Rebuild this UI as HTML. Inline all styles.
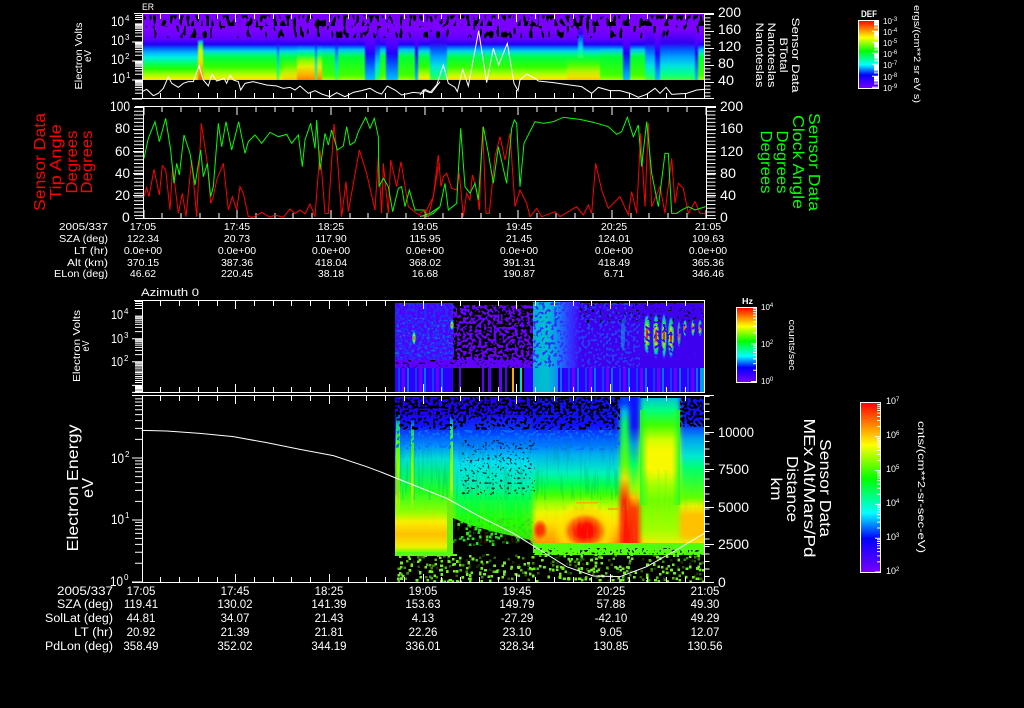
<!DOCTYPE html>
<html><head><meta charset="utf-8"><title>Sensor Data</title>
<style>
html,body{margin:0;padding:0;background:#000;width:1024px;height:708px;overflow:hidden}
svg{display:block}
text{font-family:"Liberation Sans",sans-serif;fill:#fff}
.a{shape-rendering:crispEdges}
</style></head><body>
<svg width="1024" height="708" viewBox="0 0 1024 708" xmlns="http://www.w3.org/2000/svg">
<defs>
<clipPath id="c1"><rect x="143" y="14" width="561" height="66"/></clipPath>
<clipPath id="c3"><rect x="395" y="302" width="309" height="90"/></clipPath>
<clipPath id="c4"><rect x="395" y="397" width="309" height="185"/></clipPath>
<clipPath id="c4b"><rect x="533" y="440" width="87" height="103"/></clipPath>
<filter id="b1" filterUnits="userSpaceOnUse" x="120" y="0" width="620" height="100" color-interpolation-filters="sRGB"><feGaussianBlur stdDeviation=".7 0"/></filter>
<filter id="b4" filterUnits="userSpaceOnUse" x="370" y="390" width="360" height="170" color-interpolation-filters="sRGB"><feGaussianBlur stdDeviation="2.5 0"/></filter>
<filter id="f50" x="0" y="0" width="100%" height="100%" color-interpolation-filters="sRGB"><feTurbulence type="fractalNoise" baseFrequency=".33" numOctaves="1" seed="4" result="t"/><feColorMatrix in="t" values="0 0 0 0 0 0 0 0 0 0 0 0 0 0 0 1 0 0 0 0" result="m"/><feComponentTransfer in="m" result="c"><feFuncA type="linear" slope="50" intercept="-25"/></feComponentTransfer><feComposite in="SourceGraphic" in2="c" operator="in"/></filter>
<filter id="f30" x="0" y="0" width="100%" height="100%" color-interpolation-filters="sRGB"><feTurbulence type="fractalNoise" baseFrequency=".33" numOctaves="1" seed="9" result="t"/><feColorMatrix in="t" values="0 0 0 0 0 0 0 0 0 0 0 0 0 0 0 1 0 0 0 0" result="m"/><feComponentTransfer in="m" result="c"><feFuncA type="linear" slope="50" intercept="-28"/></feComponentTransfer><feComposite in="SourceGraphic" in2="c" operator="in"/></filter>
<filter id="f15" x="0" y="0" width="100%" height="100%" color-interpolation-filters="sRGB"><feTurbulence type="fractalNoise" baseFrequency=".4" numOctaves="1" seed="15" result="t"/><feColorMatrix in="t" values="0 0 0 0 0 0 0 0 0 0 0 0 0 0 0 1 0 0 0 0" result="m"/><feComponentTransfer in="m" result="c"><feFuncA type="linear" slope="50" intercept="-31.5"/></feComponentTransfer><feComposite in="SourceGraphic" in2="c" operator="in"/></filter>
<filter id="fP1" x="0" y="0" width="100%" height="100%" color-interpolation-filters="sRGB"><feTurbulence type="fractalNoise" baseFrequency=".3 .1" numOctaves="1" seed="7" result="t"/><feColorMatrix in="t" values="0 0 0 0 0 0 0 0 0 0 0 0 0 0 0 1 0 0 0 0" result="m"/><feComponentTransfer in="m" result="c"><feFuncA type="linear" slope="50" intercept="-30"/></feComponentTransfer><feComposite in="SourceGraphic" in2="c" operator="in"/></filter>
<filter id="fP2" x="0" y="0" width="100%" height="100%" color-interpolation-filters="sRGB"><feTurbulence type="fractalNoise" baseFrequency=".3 .1" numOctaves="1" seed="12" result="t"/><feColorMatrix in="t" values="0 0 0 0 0 0 0 0 0 0 0 0 0 0 0 1 0 0 0 0" result="m"/><feComponentTransfer in="m" result="c"><feFuncA type="linear" slope="50" intercept="-27"/></feComponentTransfer><feComposite in="SourceGraphic" in2="c" operator="in"/></filter>
<filter id="fSp" x="0" y="0" width="100%" height="100%" color-interpolation-filters="sRGB"><feTurbulence type="fractalNoise" baseFrequency=".7" numOctaves="1" seed="21" result="t"/><feColorMatrix in="t" values="0 0 0 0 0 0 0 0 0 0 0 0 0 0 0 1 0 0 0 0" result="m"/><feComponentTransfer in="m" result="c"><feFuncA type="linear" slope="50" intercept="-35.5"/></feComponentTransfer><feMorphology in="c" operator="dilate" radius="1" result="d"/><feComposite in="SourceGraphic" in2="d" operator="in"/></filter>
<filter id="fSt" x="0" y="0" width="100%" height="100%" color-interpolation-filters="sRGB"><feTurbulence type="fractalNoise" baseFrequency=".45 .03" numOctaves="1" seed="5" result="t"/><feColorMatrix in="t" values="0 0 0 0 0 0 0 0 0 0 0 0 0 0 0 1 0 0 0 0" result="m"/><feComponentTransfer in="m" result="c"><feFuncA type="linear" slope="30" intercept="-16.5"/></feComponentTransfer><feComposite in="SourceGraphic" in2="c" operator="in"/></filter>

<linearGradient id="A" x1="0" y1="0" x2="0" y2="1"><stop offset=".24" stop-color="#7a00ff"/><stop offset=".38" stop-color="#6000ff"/><stop offset=".46" stop-color="#2000f0"/><stop offset=".52" stop-color="#0060ff"/><stop offset=".58" stop-color="#00b0ff"/><stop offset=".66" stop-color="#00f0e0"/><stop offset=".74" stop-color="#00ff70"/><stop offset=".83" stop-color="#20ff00"/><stop offset=".92" stop-color="#a0ff00"/><stop offset=".98" stop-color="#f0f000"/><stop offset="1" stop-color="#ffe000"/></linearGradient>
<linearGradient id="B" x1="0" y1="0" x2="0" y2="1"><stop offset=".24" stop-color="#7a00ff"/><stop offset=".38" stop-color="#6000ff"/><stop offset=".46" stop-color="#2000f0"/><stop offset=".50" stop-color="#0060ff"/><stop offset=".56" stop-color="#00d0f0"/><stop offset=".60" stop-color="#00f0a0"/><stop offset=".66" stop-color="#00ff40"/><stop offset=".80" stop-color="#30ff00"/><stop offset=".90" stop-color="#a0ff00"/><stop offset=".97" stop-color="#f0f000"/><stop offset="1" stop-color="#ffd000"/></linearGradient>
<linearGradient id="F" x1="0" y1="0" x2="0" y2="1"><stop offset=".24" stop-color="#7a00ff"/><stop offset=".38" stop-color="#6000ff"/><stop offset=".46" stop-color="#2000f0"/><stop offset=".50" stop-color="#0060ff"/><stop offset=".54" stop-color="#00c0ff"/><stop offset=".60" stop-color="#00f090"/><stop offset=".66" stop-color="#00ff30"/><stop offset=".92" stop-color="#40ff00"/><stop offset="1" stop-color="#a0ff00"/></linearGradient>
<linearGradient id="C" x1="0" y1="0" x2="0" y2="1"><stop offset=".24" stop-color="#7a00ff"/><stop offset=".46" stop-color="#5000ff"/><stop offset=".60" stop-color="#2000ff"/><stop offset=".72" stop-color="#0040ff"/><stop offset=".85" stop-color="#0080ff"/><stop offset="1" stop-color="#00c0ff"/></linearGradient>
<linearGradient id="M" x1="0" y1="0" x2="0" y2="1"><stop offset=".24" stop-color="#7a00ff"/><stop offset=".44" stop-color="#3000f0"/><stop offset=".55" stop-color="#0060ff"/><stop offset=".65" stop-color="#00a0ff"/><stop offset=".78" stop-color="#00e0e0"/><stop offset=".9" stop-color="#00ff90"/><stop offset="1" stop-color="#40ff40"/></linearGradient>
<linearGradient id="D" x1="0" y1="0" x2="0" y2="1"><stop offset=".24" stop-color="#7a00ff"/><stop offset=".38" stop-color="#6000ff"/><stop offset=".46" stop-color="#2000f0"/><stop offset=".50" stop-color="#0070ff"/><stop offset=".56" stop-color="#00e0e0"/><stop offset=".62" stop-color="#00ff60"/><stop offset=".70" stop-color="#80ff00"/><stop offset=".80" stop-color="#e0f000"/><stop offset=".92" stop-color="#ffb000"/><stop offset="1" stop-color="#ff8000"/></linearGradient>
<linearGradient id="E" x1="0" y1="0" x2="0" y2="1"><stop offset=".24" stop-color="#7a00ff"/><stop offset=".38" stop-color="#6000ff"/><stop offset=".42" stop-color="#00c0ff"/><stop offset=".47" stop-color="#30ff40"/><stop offset=".56" stop-color="#c0ff00"/><stop offset=".72" stop-color="#f0e000"/><stop offset=".88" stop-color="#ffa000"/><stop offset="1" stop-color="#ff5000"/></linearGradient>
<linearGradient id="G" x1="0" y1="0" x2="0" y2="1"><stop offset=".24" stop-color="#7a00ff"/><stop offset=".38" stop-color="#6000ff"/><stop offset=".46" stop-color="#2000f0"/><stop offset=".50" stop-color="#0060ff"/><stop offset=".56" stop-color="#00d0f0"/><stop offset=".60" stop-color="#00f0a0"/><stop offset=".66" stop-color="#00ff40"/><stop offset=".78" stop-color="#50ff00"/><stop offset=".88" stop-color="#c0f000"/><stop offset=".96" stop-color="#f0e000"/><stop offset="1" stop-color="#ffc000"/></linearGradient>

<linearGradient id="bar" x1="0" y1="0" x2="0" y2="1"><stop offset="0" stop-color="#f00"/><stop offset=".25" stop-color="#ff0"/><stop offset=".45" stop-color="#0f0"/><stop offset=".65" stop-color="#0ff"/><stop offset=".8" stop-color="#00f"/><stop offset="1" stop-color="#7800ff"/></linearGradient>

<linearGradient id="L1" x1="0" y1="0" x2="0" y2="1"><stop offset=".1" stop-color="#2000ff"/><stop offset=".18" stop-color="#1010ff"/><stop offset=".31" stop-color="#0090ff"/><stop offset=".40" stop-color="#00e0d0"/><stop offset=".48" stop-color="#00f080"/><stop offset=".6" stop-color="#20ff20"/><stop offset=".74" stop-color="#90ff00"/><stop offset=".80" stop-color="#f8f000"/><stop offset=".88" stop-color="#ffc000"/><stop offset=".96" stop-color="#f0f000"/><stop offset="1" stop-color="#60ff00"/></linearGradient>
<linearGradient id="T" x1="0" y1="0" x2="0" y2="1"><stop offset=".02" stop-color="#0050ff"/><stop offset=".1" stop-color="#00d0a0"/><stop offset=".25" stop-color="#40ff20"/><stop offset=".55" stop-color="#90ff00"/><stop offset=".8" stop-color="#e0f000" stop-opacity=".8"/><stop offset="1" stop-color="#e0f000" stop-opacity="0"/></linearGradient>
<linearGradient id="L2" x1="0" y1="0" x2="0" y2="1"><stop offset=".1" stop-color="#2000ff"/><stop offset=".24" stop-color="#0040ff"/><stop offset=".36" stop-color="#00a0ff"/><stop offset=".44" stop-color="#00e0f0"/><stop offset=".6" stop-color="#00f0b0"/><stop offset=".68" stop-color="#00ff50"/><stop offset=".85" stop-color="#20ff00"/><stop offset="1" stop-color="#40e000"/></linearGradient>
<linearGradient id="L3" x1="0" y1="0" x2="0" y2="1"><stop offset=".19" stop-color="#1010ff"/><stop offset=".29" stop-color="#0060ff"/><stop offset=".39" stop-color="#00b0f0"/><stop offset=".51" stop-color="#00f0c0"/><stop offset=".59" stop-color="#00ff50"/><stop offset=".66" stop-color="#40ff00"/><stop offset=".72" stop-color="#a0ff00"/><stop offset=".78" stop-color="#e8f800"/><stop offset=".85" stop-color="#ffe000"/><stop offset=".93" stop-color="#ffb000"/><stop offset="1" stop-color="#ff9000"/></linearGradient>
<linearGradient id="R1" x1="0" y1="0" x2="0" y2="1"><stop offset=".04" stop-color="#0040ff"/><stop offset=".1" stop-color="#00c0e0"/><stop offset=".18" stop-color="#00ff60"/><stop offset=".45" stop-color="#60ff00"/><stop offset=".55" stop-color="#f0e000"/><stop offset=".62" stop-color="#ff8000"/><stop offset=".70" stop-color="#ff2000"/><stop offset="1" stop-color="#ff1000"/></linearGradient>
<linearGradient id="R2" x1="0" y1="0" x2="0" y2="1"><stop offset=".2" stop-color="#1010ff"/><stop offset=".32" stop-color="#00a0e0"/><stop offset=".46" stop-color="#00ff60"/><stop offset=".62" stop-color="#a0ff00"/><stop offset=".68" stop-color="#ffc000"/><stop offset=".75" stop-color="#ff4000"/><stop offset="1" stop-color="#ff2000"/></linearGradient>
<linearGradient id="L5" x1="0" y1="0" x2="0" y2="1"><stop offset="0" stop-color="#00c0e0"/><stop offset=".09" stop-color="#00ff80"/><stop offset=".19" stop-color="#40ff00"/><stop offset=".29" stop-color="#d0ff00"/><stop offset=".36" stop-color="#f8f800"/><stop offset=".5" stop-color="#f8f800"/><stop offset=".6" stop-color="#a0ff00"/><stop offset=".7" stop-color="#70ff00"/><stop offset=".9" stop-color="#a0ff00"/><stop offset="1" stop-color="#f0f000"/></linearGradient>
<linearGradient id="L6" x1="0" y1="0" x2="0" y2="1"><stop offset=".16" stop-color="#1010ff"/><stop offset=".28" stop-color="#00a0f0"/><stop offset=".4" stop-color="#00e8d0"/><stop offset=".48" stop-color="#00ff70"/><stop offset=".68" stop-color="#60ff00"/><stop offset=".74" stop-color="#f0f000"/><stop offset=".8" stop-color="#ffc000"/><stop offset=".93" stop-color="#ffc000"/><stop offset="1" stop-color="#f0f000"/></linearGradient>
<linearGradient id="sideL" x1="0" y1="0" x2="1" y2="0"><stop offset="0" stop-color="#20ff20" stop-opacity=".9"/><stop offset="1" stop-color="#20ff20" stop-opacity="0"/></linearGradient>
<linearGradient id="sideR" x1="0" y1="0" x2="1" y2="0"><stop offset="0" stop-color="#20ff20" stop-opacity="0"/><stop offset="1" stop-color="#20ff20" stop-opacity=".9"/></linearGradient>
<radialGradient id="hot"><stop offset="0" stop-color="#ff0000"/><stop offset=".4" stop-color="#ff1000"/><stop offset=".75" stop-color="#ff6000" stop-opacity=".8"/><stop offset="1" stop-color="#ffa000" stop-opacity="0"/></radialGradient>
<radialGradient id="dome"><stop offset="0" stop-color="#ffc000"/><stop offset=".7" stop-color="#ffe000"/><stop offset="1" stop-color="#ffff00" stop-opacity="0"/></radialGradient>
<radialGradient id="pk"><stop offset="0" stop-color="#ff0000"/><stop offset=".22" stop-color="#ff2000"/><stop offset=".36" stop-color="#f0f000"/><stop offset=".56" stop-color="#20ff20"/><stop offset=".8" stop-color="#00c0e0"/><stop offset="1" stop-color="#0060ff" stop-opacity="0"/></radialGradient>
<linearGradient id="cy" x1="0" y1="0" x2="1" y2="0"><stop offset="0" stop-color="#00b0d8"/><stop offset=".3" stop-color="#00c0d0"/><stop offset=".5" stop-color="#1090f0"/><stop offset=".75" stop-color="#3040ff"/><stop offset="1" stop-color="#4000f0"/></linearGradient>
<pattern id="stL" width="17" height="24" patternUnits="userSpaceOnUse" x="395" y="368"><rect width="17" height="24" fill="#3000ff"/><rect x="3" width="2" height="24" fill="#1040ff"/><rect x="7" width="3" height="24" fill="#6a00ff"/><rect x="12" width="2" height="24" fill="#0070ff"/></pattern>
<g id="xt"><path fill="none" stroke="#fff" d="M142.5 0v8M160.5 0v5M179.5 0v5M198.5 0v5M217.5 0v5M235.5 0v8M254.5 0v5M273.5 0v5M291.5 0v5M310.5 0v5M329.5 0v8M348.5 0v5M366.5 0v5M385.5 0v5M404.5 0v5M423.5 0v8M441.5 0v5M460.5 0v5M479.5 0v5M498.5 0v5M516.5 0v8M535.5 0v5M554.5 0v5M573.5 0v5M591.5 0v5M610.5 0v8M629.5 0v5M647.5 0v5M666.5 0v5M685.5 0v5M704.5 0v8"/></g>
<g id="dec"><path fill="none" stroke="#fff" vector-effect="non-scaling-stroke" d="M3 69.9H10M3 52.3H10M3 39.8H10M3 30.1H10M3 22.2H10M3 15.5H10M3 9.7H10M3 4.6H10M0 100H10" /></g>
<g id="bt"><path fill="none" stroke="#fff" vector-effect="non-scaling-stroke" d="M2 69.9H6M2 52.3H6M2 39.8H6M2 30.1H6M2 22.2H6M2 15.5H6M2 9.7H6M2 4.6H6M0 100H6"/></g>
</defs>
<rect width="1024" height="708" fill="#000"/>

<!-- Panel 1 spectrogram -->
<g clip-path="url(#c1)">
<g filter="url(#b1)">
<rect x="130" y="14" width="68" height="66" fill="url(#A)"/>
<rect x="198" y="14" width="5" height="66" fill="url(#E)"/>
<rect x="203" y="14" width="80" height="66" fill="url(#B)"/>
<rect x="277" y="14" width="2" height="66" fill="url(#M)"/>
<rect x="283" y="14" width="14" height="66" fill="url(#G)"/>
<rect x="297" y="14" width="25" height="66" fill="url(#D)"/>
<rect x="315" y="14" width="2" height="66" fill="url(#M)"/>
<rect x="322" y="14" width="43" height="66" fill="url(#F)"/>
<rect x="335" y="14" width="3" height="66" fill="url(#M)"/>
<rect x="365" y="14" width="10" height="66" fill="url(#C)"/>
<rect x="375" y="14" width="5" height="66" fill="url(#M)"/>
<rect x="380" y="14" width="6" height="66" fill="url(#F)"/>
<rect x="386" y="14" width="12" height="66" fill="url(#C)"/>
<rect x="398" y="14" width="17" height="66" fill="url(#F)"/>
<rect x="415" y="14" width="3" height="66" fill="url(#C)"/>
<rect x="418" y="14" width="12" height="66" fill="url(#B)"/>
<rect x="430" y="14" width="17" height="66" fill="url(#M)"/>
<rect x="447" y="14" width="120" height="66" fill="url(#B)"/>
<rect x="567" y="14" width="33" height="66" fill="url(#G)"/>
<rect x="578" y="14" width="5" height="44" fill="url(#M)"/>
<rect x="600" y="14" width="23" height="66" fill="url(#F)"/>
<rect x="623" y="14" width="7" height="66" fill="url(#C)"/>
<rect x="630" y="14" width="15" height="66" fill="url(#F)"/>
<rect x="645" y="14" width="10" height="66" fill="url(#M)"/>
<rect x="655" y="14" width="5" height="66" fill="url(#C)"/>
<rect x="660" y="14" width="35" height="66" fill="url(#M)"/>
<rect x="695" y="14" width="3" height="66" fill="url(#C)"/>
<rect x="698" y="14" width="20" height="66" fill="url(#F)"/>
</g>
<rect x="142" y="15" width="562" height="11" fill="#000" filter="url(#fP2)"/>
<rect x="142" y="26" width="562" height="12" fill="#000" filter="url(#fP1)"/>
</g>

<!-- Panel 3 spectrogram -->
<g clip-path="url(#c3)">
<rect x="395" y="303" width="58" height="65" fill="#5000ff"/>
<rect x="395" y="303" width="58" height="65" fill="#2030f0" filter="url(#f50)"/>
<rect x="395" y="318" width="58" height="40" fill="#00a0e0" filter="url(#f15)" opacity=".5"/>
<rect x="453" y="305" width="80" height="63" fill="#6a00ff" filter="url(#f50)"/>
<rect x="533" y="302" width="47" height="90" fill="url(#cy)"/>
<rect x="533" y="302" width="47" height="66" fill="#3030ff" filter="url(#f30)"/>
<rect x="580" y="303" width="124" height="65" fill="#4000f0"/>
<rect x="580" y="303" width="124" height="65" fill="#2040f0" filter="url(#f30)"/>
<rect x="580" y="303" width="124" height="20" fill="#000" filter="url(#f15)"/>
<rect x="395" y="360" width="138" height="8" fill="#6000ff"/>
<rect x="395" y="360" width="138" height="8" fill="#000" filter="url(#f15)"/>
<rect x="395" y="368" width="52" height="24" fill="url(#stL)"/>
<rect x="447" y="368" width="6" height="24" fill="#3000ff"/>
<rect x="459" y="368" width="2" height="24" fill="#6000ff"/>
<rect x="482" y="368" width="2" height="24" fill="#6000ff"/>
<rect x="488" y="368" width="3" height="24" fill="#5000ff"/>
<rect x="499" y="368" width="3" height="24" fill="#6000ff"/>
<rect x="505" y="368" width="2" height="24" fill="#5000ff"/>
<rect x="512" y="368" width="2" height="24" fill="#ffa800"/>
<rect x="520" y="368" width="2" height="24" fill="#00e0d0"/>
<rect x="524" y="368" width="9" height="24" fill="#3000ff"/>
<rect x="558" y="368" width="146" height="24" fill="url(#stL)"/>
<rect x="700" y="368" width="4" height="24" fill="#00a0e0"/>
<g opacity=".9">
<ellipse cx="647" cy="334" rx="3.5" ry="22" fill="url(#pk)"/>
<ellipse cx="656" cy="336" rx="3.5" ry="24" fill="url(#pk)"/>
<ellipse cx="664" cy="336" rx="3" ry="24" fill="url(#pk)"/>
<ellipse cx="671" cy="337" rx="3.5" ry="22" fill="url(#pk)"/>
<ellipse cx="679" cy="334" rx="2" ry="14" fill="url(#pk)" opacity=".7"/>
<ellipse cx="685" cy="328" rx="2" ry="9" fill="url(#pk)"/>
<ellipse cx="693" cy="328" rx="2" ry="9" fill="url(#pk)"/>
<ellipse cx="700" cy="328" rx="2" ry="9" fill="url(#pk)"/>
</g>
<ellipse cx="452" cy="325" rx="2" ry="5" fill="url(#pk)"/>
<ellipse cx="414" cy="338" rx="2" ry="7" fill="url(#pk)"/>
<ellipse cx="623" cy="335" rx="2" ry="16" fill="#00c0d0" opacity=".5"/>
<rect x="640" y="303" width="64" height="65" fill="#4000f0" filter="url(#f30)"/>
</g>

<!-- Panel 4 spectrogram -->
<g clip-path="url(#c4)">
<g filter="url(#b4)">
<rect x="380" y="397" width="73" height="156" fill="url(#L1)"/>
<rect x="453" y="397" width="80" height="148" fill="url(#L2)"/>
<rect x="533" y="397" width="87" height="148" fill="url(#L3)"/>
<rect x="620" y="397" width="9" height="148" fill="url(#R1)"/>
<rect x="629" y="397" width="11" height="148" fill="url(#R2)"/>
<rect x="640" y="397" width="40" height="148" fill="url(#L5)"/>
<rect x="680" y="397" width="40" height="148" fill="url(#L6)"/>
</g>
<rect x="447" y="500" width="6" height="53" fill="#60f010"/>
<rect x="396" y="415" width="4" height="100" fill="url(#T)"/>
<rect x="411" y="420" width="3" height="90" fill="url(#T)"/>
<rect x="450" y="415" width="3" height="90" fill="url(#T)"/>
<rect x="640" y="410" width="8" height="95" fill="url(#sideL)"/>
<rect x="672" y="410" width="8" height="95" fill="url(#sideR)"/>
<g clip-path="url(#c4b)">
<ellipse cx="585" cy="532" rx="32" ry="34" fill="url(#dome)" opacity=".8"/>
<ellipse cx="585" cy="531" rx="22" ry="18" fill="url(#hot)"/>
<ellipse cx="540" cy="530" rx="8" ry="11" fill="url(#hot)" opacity=".8"/>
</g>
<rect x="576" y="502" width="22" height="1.5" fill="#ffa000" opacity=".8"/>
<rect x="608" y="508" width="12" height="2" fill="#ffa000" opacity=".8"/>
<path d="M453 518L470 525L495 532L530 540L533 545V556H453Z" fill="#000"/>
<rect x="453" y="518" width="80" height="28" fill="#20e020" filter="url(#fSp)"/>
<rect x="395" y="430" width="225" height="70" fill="#008090" opacity=".18" filter="url(#fSt)"/>
<rect x="395" y="470" width="309" height="40" fill="#00ff40" opacity=".12" filter="url(#fSt)"/>
<rect x="395" y="500" width="309" height="43" fill="#ffd000" opacity=".12" filter="url(#fSt)"/>
<rect x="395" y="397" width="225" height="18" fill="#000" filter="url(#f50)"/>
<rect x="395" y="415" width="225" height="15" fill="#000" filter="url(#f30)"/>
<rect x="395" y="430" width="225" height="20" fill="#0070ff" filter="url(#f30)"/>
<rect x="460" y="440" width="75" height="55" fill="#000" filter="url(#f15)" opacity=".7"/>
<rect x="640" y="397" width="64" height="1" fill="#000"/>
<rect x="680" y="397" width="24" height="30" fill="#000" filter="url(#f50)"/>
<rect x="533" y="543" width="171" height="12" fill="#50ff10"/>
<rect x="395" y="552" width="58" height="4" fill="#50ff10"/>
<rect x="533" y="548" width="171" height="8" fill="#000" filter="url(#f15)"/>
<rect x="395" y="554" width="309" height="28" fill="#70f020" filter="url(#fSp)"/>
</g>

<!-- Frames -->
<g class="a" stroke="#fff" fill="none">
<path d="M134 13.5H714M132 98.5H714M142.5 13V98M704.5 13V98"/>
<path d="M135 106.5H716M135 218.5H716M143.5 106V218M706.5 106V218"/>
<path d="M134 300.5H705M134 392.5H705M142.5 300V392M704.5 300V392"/>
<path d="M132 395.5H714M132 582.5H714M142.5 395V582M704.5 395V582"/>
</g>
<g class="a">
<use href="#xt" transform="translate(0,14)"/>
<use href="#xt" transform="translate(0,98) scale(1,-1)"/>
<use href="#xt" transform="translate(1.5,107)"/>
<use href="#xt" transform="translate(1.5,218) scale(1,-1)"/>
<use href="#xt" transform="translate(0,301)"/>
<use href="#xt" transform="translate(0,392) scale(1,-1)"/>
<use href="#xt" transform="translate(0,396)"/>
<use href="#xt" transform="translate(0,582) scale(1,-1)"/>
</g>

<!-- Log ticks left -->
<g>
<use href="#dec" transform="translate(132,61) scale(1,.19)"/>
<use href="#dec" transform="translate(132,42) scale(1,.19)"/>
<use href="#dec" transform="translate(132,23) scale(1,.19)"/>
<use href="#dec" transform="translate(132,80) scale(1,.19)"/>
<path d="M135 19.5H142M135 17.5H142M135 15.5H142" stroke="#fff"/>
<use href="#dec" transform="translate(132,338) scale(1,.237)"/>
<use href="#dec" transform="translate(132,315) scale(1,.237)"/>
<use href="#dec" transform="translate(132,361.7) scale(1,.237)"/>
<use href="#dec" transform="translate(132,385.4) scale(1,.07)"/>
<path d="M135 308.5H142M135 305.5H142M135 303.5H142M135 301.5H142M135 372.5H142M135 376.5H142M135 380.5H142M135 382.5H142M135 391.5H142" stroke="#fff" class="a"/>
<use href="#dec" transform="translate(132,458) scale(1,.62)"/>
<use href="#dec" transform="translate(132,396) scale(1,.62)"/>
<use href="#dec" transform="translate(132,519.5) scale(1,.625)"/>
</g>
<!-- Linear ticks -->
<g fill="none" stroke="#fff">
<line x1="707.5" y1="14" x2="707.5" y2="98" stroke-width="6" stroke-dasharray="1 2.4"/>
<path class="a" d="M704 14.5H714M704 31.5H714M704 48.5H714M704 65.5H714M704 82.5H714"/>
<line x1="138.5" y1="107" x2="138.5" y2="218" stroke-width="9" stroke-dasharray="1 2.73"/>
<line x1="711" y1="107" x2="711" y2="218" stroke-width="9" stroke-dasharray="1 2.73"/>
<path class="a" d="M706 107.5H716M706 129.5H716M706 151.5H716M706 173.5H716M706 195.5H716M133 129.5H143M133 151.5H143M133 173.5H143M133 195.5H143"/>
<line x1="707" y1="396" x2="707" y2="582" stroke-width="5" stroke-dasharray="1 6.5"/>
<path class="a" d="M704 432.5H714M704 469.5H714M704 507.5H714M704 544.5H714"/>
</g>

<!-- Lines P1 -->
<g transform="scale(.33333)" fill="none" stroke="#fff" stroke-width="3">
<polyline points="426,275 440,268 460,287 475,280 490,265 505,230 515,250 535,262 550,250 565,245 580,245 597,197 610,240 625,258 636,222 650,243 660,240 672,235 680,250 690,225 700,240 715,245 722,270 735,250 760,245 800,255 830,258 850,265 870,262 885,270 900,258 925,280 945,272 965,282 990,290 1010,278 1035,290 1060,277 1085,272 1110,265 1130,277 1145,282 1162,258 1185,270 1205,285 1240,277 1270,280 1275,268 1295,278 1320,245"/>
</g>
<g transform="translate(420,0) scale(.33333)" fill="none" stroke="#fff" stroke-width="3">
<polyline points="0,285 10,270 30,278 50,255 70,195 85,250 105,262 112,275 128,208 145,258 176,92 200,248 220,145 236,195 262,130 282,250 294,272 300,240 320,222 345,235 355,243 400,248 450,255 485,260 515,280 535,262 570,272 600,272 630,280 655,292 680,283 705,265 720,280 738,262 755,283 800,280 830,270 852,268"/>
</g>
<!-- Lines P2 -->
<g transform="scale(.33333)" fill="none" stroke-width="3">
<polyline stroke="#ff0000" points="432,590 440,563 447,590 462,508 478,585 487,497 497,510 510,630 518,500 535,640 547,580 558,650 575,480 590,650 604,370 622,490 632,610 640,590 650,540 670,490 685,630 697,590 710,630 720,560 730,580 745,650 760,652 785,637 810,652 825,645 850,652 870,627 885,640 900,630 915,642 930,612 945,650 960,450 975,640 985,640 1002,372 1012,470 1025,650 1038,545 1045,635 1078,450 1100,520 1125,630 1135,470 1145,640 1150,490 1165,640 1172,480 1190,560 1203,485 1225,620 1250,640 1270,650 1300,590 1315,500 1320,490"/>
<polyline stroke="#00ff00" points="432,475 445,415 465,365 478,425 497,355 512,450 522,550 530,490 538,525 552,405 570,460 585,555 602,450 610,530 622,490 632,590 640,560 655,370 665,440 678,365 695,450 716,365 735,460 745,425 765,405 785,430 810,397 835,410 860,403 875,430 895,405 907,500 915,420 932,370 945,445 950,360 960,510 975,400 985,435 995,390 1012,450 1030,438 1040,380 1050,435 1065,425 1075,395 1097,352 1110,385 1123,355 1135,410 1137,560 1150,535 1165,560 1178,635 1195,565 1205,560 1215,620 1228,570 1245,630 1275,630 1280,650 1300,640 1320,620"/>
</g>
<g transform="translate(420,0) scale(.33333)" fill="none" stroke-width="3">
<polyline stroke="#ff0000" points="0,640 15,630 25,650 40,590 55,465 63,560 70,530 80,520 95,565 110,570 118,520 130,650 140,580 150,600 157,525 170,570 178,630 188,380 198,640 208,640 225,470 240,410 255,480 270,400 285,620 300,570 320,610 330,650 350,625 365,650 405,635 420,650 470,620 490,645 505,615 515,640 527,490 545,570 565,625 600,590 625,645 635,575 650,640 662,400 675,620 685,370 695,620 720,560 735,640 755,475 765,610 775,550 790,565 805,640 825,605 840,640 857,640"/>
<polyline stroke="#00ff00" points="0,650 30,640 60,620 75,550 85,630 110,610 122,385 135,560 150,580 165,550 175,600 190,380 205,460 220,550 235,440 260,550 275,385 283,360 290,370 300,560 312,430 345,365 370,370 400,365 430,352 480,358 520,367 565,380 590,403 605,395 622,352 640,410 655,375 665,500 680,365 695,520 715,620 735,460 745,460 755,640 770,640 785,630 805,620 825,630 857,620"/>
</g>
<!-- Line P4 -->
<g transform="translate(0,290) scale(.33333)" fill="none" stroke="#fff" stroke-width="3">
<polyline points="425,421 500,423 600,430 700,440 800,458 900,478 1000,497 1100,530 1140,545 1240,585 1340,625 1440,680 1540,730 1620,780 1700,830 1780,858 1860,860 1940,830 2020,785 2113,730"/>
</g>

<!-- Color bars -->
<rect x="858.5" y="20.5" width="20" height="68" fill="url(#bar)" stroke="#fff"/>
<g transform="translate(872,0)">
<use href="#bt" transform="translate(0,20) scale(1,.113)"/><use href="#bt" transform="translate(0,31) scale(1,.113)"/><use href="#bt" transform="translate(0,42) scale(1,.113)"/><use href="#bt" transform="translate(0,53) scale(1,.113)"/><use href="#bt" transform="translate(0,65) scale(1,.113)"/><use href="#bt" transform="translate(0,76) scale(1,.113)"/>
</g>
<rect x="736.5" y="307.5" width="20" height="75" fill="url(#bar)" stroke="#fff"/>
<g transform="translate(751,0)"><use href="#bt" transform="translate(0,307) scale(1,.37)"/><use href="#bt" transform="translate(0,344) scale(1,.375)"/></g>
<rect x="860.5" y="402.5" width="20" height="170" fill="url(#bar)" stroke="#fff"/>
<g transform="translate(875,0)"><use href="#bt" transform="translate(0,403) scale(1,.338)"/><use href="#bt" transform="translate(0,436.8) scale(1,.338)"/><use href="#bt" transform="translate(0,470.6) scale(1,.338)"/><use href="#bt" transform="translate(0,504.4) scale(1,.338)"/><use href="#bt" transform="translate(0,538.2) scale(1,.338)"/></g>

<!-- Titles -->
<text x="142" y="10" font-size="9.5" textLength="12" lengthAdjust="spacingAndGlyphs">ER</text>
<text x="141" y="296" font-size="11" textLength="58" lengthAdjust="spacingAndGlyphs">Azimuth 0</text>
<text x="861" y="17" font-size="9" font-weight="bold" textLength="16" lengthAdjust="spacingAndGlyphs">DEF</text>
<text x="742" y="304" font-size="8" font-weight="bold" textLength="11" lengthAdjust="spacingAndGlyphs">Hz</text>

<!-- Axis labels P1 -->
<g font-size="14">
<text x="111" y="26" textLength="13" lengthAdjust="spacingAndGlyphs">10</text><text x="125" y="21" font-size="8">4</text>
<text x="111" y="45" textLength="13" lengthAdjust="spacingAndGlyphs">10</text><text x="125" y="40" font-size="8">3</text>
<text x="111" y="64" textLength="13" lengthAdjust="spacingAndGlyphs">10</text><text x="125" y="59" font-size="8">2</text>
<text x="112" y="83" textLength="13" lengthAdjust="spacingAndGlyphs">10</text><text x="126" y="78" font-size="8">1</text>
<text x="718" y="17" textLength="23" lengthAdjust="spacingAndGlyphs">200</text><text x="718" y="34" textLength="23" lengthAdjust="spacingAndGlyphs">160</text><text x="718" y="51" textLength="23" lengthAdjust="spacingAndGlyphs">120</text><text x="718" y="68" textLength="16" lengthAdjust="spacingAndGlyphs">80</text><text x="718" y="85" textLength="16" lengthAdjust="spacingAndGlyphs">40</text>
</g>
<g font-size="10">
<text transform="translate(82,56) rotate(-90)" text-anchor="middle" textLength="67" lengthAdjust="spacingAndGlyphs">Electron Volts</text>
<text transform="translate(91,56) rotate(-90)" text-anchor="middle" textLength="12" lengthAdjust="spacingAndGlyphs">eV</text>
</g>
<g font-size="11">
<text transform="translate(792,55) rotate(90)" text-anchor="middle" textLength="75" lengthAdjust="spacingAndGlyphs">Sensor Data</text>
<text transform="translate(780,55) rotate(90)" text-anchor="middle" textLength="35" lengthAdjust="spacingAndGlyphs">BTotal</text>
<text transform="translate(768,55) rotate(90)" text-anchor="middle" textLength="65" lengthAdjust="spacingAndGlyphs">Nanoteslas</text>
<text transform="translate(756,55) rotate(90)" text-anchor="middle" textLength="65" lengthAdjust="spacingAndGlyphs">Nanoteslas</text>
</g>
<g font-size="8">
<text x="883" y="24">10<tspan dy="-3" font-size="6">-3</tspan></text>
<text x="883" y="35">10<tspan dy="-3" font-size="6">-4</tspan></text>
<text x="883" y="46">10<tspan dy="-3" font-size="6">-5</tspan></text>
<text x="883" y="57">10<tspan dy="-3" font-size="6">-6</tspan></text>
<text x="883" y="68">10<tspan dy="-3" font-size="6">-7</tspan></text>
<text x="883" y="80">10<tspan dy="-3" font-size="6">-8</tspan></text>
<text x="883" y="91">10<tspan dy="-3" font-size="6">-9</tspan></text>
<text transform="translate(914,54) rotate(90)" text-anchor="middle" textLength="98" lengthAdjust="spacingAndGlyphs" font-size="9">ergs/(cm**2 sr eV s)</text>
</g>

<!-- Axis labels P2 -->
<g font-size="14">
<text x="110" y="111" textLength="20" lengthAdjust="spacingAndGlyphs">100</text><text x="115" y="133" textLength="15" lengthAdjust="spacingAndGlyphs">80</text><text x="115" y="156" textLength="15" lengthAdjust="spacingAndGlyphs">60</text><text x="115" y="178" textLength="15" lengthAdjust="spacingAndGlyphs">40</text><text x="115" y="200" textLength="15" lengthAdjust="spacingAndGlyphs">20</text><text x="122" y="222">0</text>
<text x="720" y="111" textLength="23" lengthAdjust="spacingAndGlyphs">200</text><text x="720" y="133" textLength="23" lengthAdjust="spacingAndGlyphs">160</text><text x="720" y="156" textLength="23" lengthAdjust="spacingAndGlyphs">120</text><text x="720" y="178" textLength="16" lengthAdjust="spacingAndGlyphs">80</text><text x="720" y="200" textLength="16" lengthAdjust="spacingAndGlyphs">40</text><text x="720" y="222">0</text>
</g>
<g font-size="16">
<text transform="translate(45,162) rotate(-90)" text-anchor="middle" textLength="98" lengthAdjust="spacingAndGlyphs" style="fill:#f00">Sensor Data</text>
<text transform="translate(61,162) rotate(-90)" text-anchor="middle" textLength="76" lengthAdjust="spacingAndGlyphs" style="fill:#f00">Tip Angle</text>
<text transform="translate(77,162) rotate(-90)" text-anchor="middle" textLength="63" lengthAdjust="spacingAndGlyphs" style="fill:#f00">Degrees</text>
<text transform="translate(92,162) rotate(-90)" text-anchor="middle" textLength="63" lengthAdjust="spacingAndGlyphs" style="fill:#f00">Degrees</text>
<text transform="translate(809,162) rotate(90)" text-anchor="middle" textLength="98" lengthAdjust="spacingAndGlyphs" style="fill:#0f0">Sensor Data</text>
<text transform="translate(793,162) rotate(90)" text-anchor="middle" textLength="94" lengthAdjust="spacingAndGlyphs" style="fill:#0f0">Clock Angle</text>
<text transform="translate(777,162) rotate(90)" text-anchor="middle" textLength="63" lengthAdjust="spacingAndGlyphs" style="fill:#0f0">Degrees</text>
<text transform="translate(761,162) rotate(90)" text-anchor="middle" textLength="63" lengthAdjust="spacingAndGlyphs" style="fill:#0f0">Degrees</text>
</g>

<!-- Table P2 -->
<g font-size="10.5" text-anchor="end">
<text x="108" y="230" textLength="49" lengthAdjust="spacingAndGlyphs">2005/337</text>
<text x="108" y="242" textLength="49" lengthAdjust="spacingAndGlyphs">SZA (deg)</text>
<text x="108" y="254" textLength="34" lengthAdjust="spacingAndGlyphs">LT (hr)</text>
<text x="108" y="266" textLength="41" lengthAdjust="spacingAndGlyphs">Alt (km)</text>
<text x="108" y="277" textLength="54" lengthAdjust="spacingAndGlyphs">ELon (deg)</text>
</g>
<g font-size="10.5" text-anchor="middle">
<text x="143" y="230">17:05</text><text x="237" y="230">17:45</text><text x="331" y="230">18:25</text><text x="425" y="230">19:05</text><text x="519" y="230">19:45</text><text x="614" y="230">20:25</text><text x="708" y="230">21:05</text>
<text x="143" y="242">122.34</text><text x="237" y="242">20.73</text><text x="331" y="242">117.90</text><text x="425" y="242">115.95</text><text x="519" y="242">21.45</text><text x="614" y="242">124.01</text><text x="708" y="242">109.63</text>
<text x="143" y="254">0.0e+00</text><text x="237" y="254">0.0e+00</text><text x="331" y="254">0.0e+00</text><text x="425" y="254">0.0e+00</text><text x="519" y="254">0.0e+00</text><text x="614" y="254">0.0e+00</text><text x="708" y="254">0.0e+00</text>
<text x="143" y="266">370.15</text><text x="237" y="266">387.36</text><text x="331" y="266">418.04</text><text x="425" y="266">368.02</text><text x="519" y="266">391.31</text><text x="614" y="266">418.49</text><text x="708" y="266">365.36</text>
<text x="143" y="277">46.62</text><text x="237" y="277">220.45</text><text x="331" y="277">38.18</text><text x="425" y="277">16.68</text><text x="519" y="277">190.87</text><text x="614" y="277">6.71</text><text x="708" y="277">346.46</text>
</g>

<!-- Axis labels P3 -->
<g font-size="13">
<text x="111" y="319" textLength="12" lengthAdjust="spacingAndGlyphs">10</text><text x="124" y="314" font-size="8">4</text>
<text x="111" y="343" textLength="12" lengthAdjust="spacingAndGlyphs">10</text><text x="124" y="338" font-size="8">3</text>
<text x="111" y="366" textLength="12" lengthAdjust="spacingAndGlyphs">10</text><text x="124" y="361" font-size="8">2</text>
</g>
<g font-size="10">
<text transform="translate(80,346) rotate(-90)" text-anchor="middle" textLength="72" lengthAdjust="spacingAndGlyphs">Electron Volts</text>
<text transform="translate(89,346) rotate(-90)" text-anchor="middle" textLength="11" lengthAdjust="spacingAndGlyphs">eV</text>
<text x="761" y="310" font-size="8">10<tspan dy="-3" font-size="6">4</tspan></text>
<text x="761" y="347" font-size="8">10<tspan dy="-3" font-size="6">2</tspan></text>
<text x="761" y="384" font-size="8">10<tspan dy="-3" font-size="6">0</tspan></text>
<text transform="translate(789,345) rotate(90)" text-anchor="middle" textLength="51" lengthAdjust="spacingAndGlyphs" font-size="9">counts/sec</text>
</g>

<!-- Axis labels P4 -->
<g font-size="14">
<text x="111" y="463" textLength="13" lengthAdjust="spacingAndGlyphs">10</text><text x="125" y="457" font-size="8">2</text>
<text x="111" y="524" textLength="13" lengthAdjust="spacingAndGlyphs">10</text><text x="125" y="518" font-size="8">1</text>
<text x="110" y="586" textLength="13" lengthAdjust="spacingAndGlyphs">10</text><text x="124" y="580" font-size="8">0</text>
<text x="718" y="437" textLength="36" lengthAdjust="spacingAndGlyphs">10000</text><text x="718" y="474" textLength="31" lengthAdjust="spacingAndGlyphs">7500</text><text x="718" y="512" textLength="31" lengthAdjust="spacingAndGlyphs">5000</text><text x="718" y="549" textLength="31" lengthAdjust="spacingAndGlyphs">2500</text><text x="718" y="587">0</text>
</g>
<g font-size="16">
<text transform="translate(78,488) rotate(-90)" text-anchor="middle" textLength="127" lengthAdjust="spacingAndGlyphs">Electron Energy</text>
<text transform="translate(93,488) rotate(-90)" text-anchor="middle" textLength="20" lengthAdjust="spacingAndGlyphs">eV</text>
<text transform="translate(820,488) rotate(90)" text-anchor="middle" textLength="98" lengthAdjust="spacingAndGlyphs">Sensor Data</text>
<text transform="translate(804,488) rotate(90)" text-anchor="middle" textLength="139" lengthAdjust="spacingAndGlyphs">MEx Alt/Mars/Pd</text>
<text transform="translate(787,489) rotate(90)" text-anchor="middle" textLength="66" lengthAdjust="spacingAndGlyphs">Distance</text>
<text transform="translate(771,489) rotate(90)" text-anchor="middle" textLength="23" lengthAdjust="spacingAndGlyphs">km</text>
</g>
<g font-size="9">
<text x="886" y="404">10<tspan dy="-3" font-size="6">7</tspan></text>
<text x="886" y="438">10<tspan dy="-3" font-size="6">6</tspan></text>
<text x="886" y="472">10<tspan dy="-3" font-size="6">5</tspan></text>
<text x="886" y="506">10<tspan dy="-3" font-size="6">4</tspan></text>
<text x="886" y="540">10<tspan dy="-3" font-size="6">3</tspan></text>
<text x="886" y="574">10<tspan dy="-3" font-size="6">2</tspan></text>
<text transform="translate(918,487) rotate(90)" text-anchor="middle" textLength="132" lengthAdjust="spacingAndGlyphs" font-size="10">cnts/(cm**2-sr-sec-eV)</text>
</g>

<!-- Table P4 -->
<g font-size="11.5" text-anchor="end">
<text x="113" y="595" textLength="56" lengthAdjust="spacingAndGlyphs">2005/337</text>
<text x="113" y="608" textLength="56" lengthAdjust="spacingAndGlyphs">SZA (deg)</text>
<text x="113" y="622" textLength="68" lengthAdjust="spacingAndGlyphs">SolLat (deg)</text>
<text x="113" y="636" textLength="39" lengthAdjust="spacingAndGlyphs">LT (hr)</text>
<text x="113" y="650" textLength="68" lengthAdjust="spacingAndGlyphs">PdLon (deg)</text>
</g>
<g font-size="11.5" text-anchor="middle">
<text x="141" y="595">17:05</text><text x="235" y="595">17:45</text><text x="329" y="595">18:25</text><text x="423" y="595">19:05</text><text x="517" y="595">19:45</text><text x="611" y="595">20:25</text><text x="705" y="595">21:05</text>
<text x="141" y="608">119.41</text><text x="235" y="608">130.02</text><text x="329" y="608">141.39</text><text x="423" y="608">153.63</text><text x="517" y="608">149.79</text><text x="611" y="608">57.88</text><text x="705" y="608">49.30</text>
<text x="141" y="622">44.81</text><text x="235" y="622">34.07</text><text x="329" y="622">21.43</text><text x="423" y="622">4.13</text><text x="517" y="622">-27.29</text><text x="611" y="622">-42.10</text><text x="705" y="622">49.29</text>
<text x="141" y="636">20.92</text><text x="235" y="636">21.39</text><text x="329" y="636">21.81</text><text x="423" y="636">22.26</text><text x="517" y="636">23.10</text><text x="611" y="636">9.05</text><text x="705" y="636">12.07</text>
<text x="141" y="650">358.49</text><text x="235" y="650">352.02</text><text x="329" y="650">344.19</text><text x="423" y="650">336.01</text><text x="517" y="650">328.34</text><text x="611" y="650">130.85</text><text x="705" y="650">130.56</text>
</g>
</svg>
</body></html>
